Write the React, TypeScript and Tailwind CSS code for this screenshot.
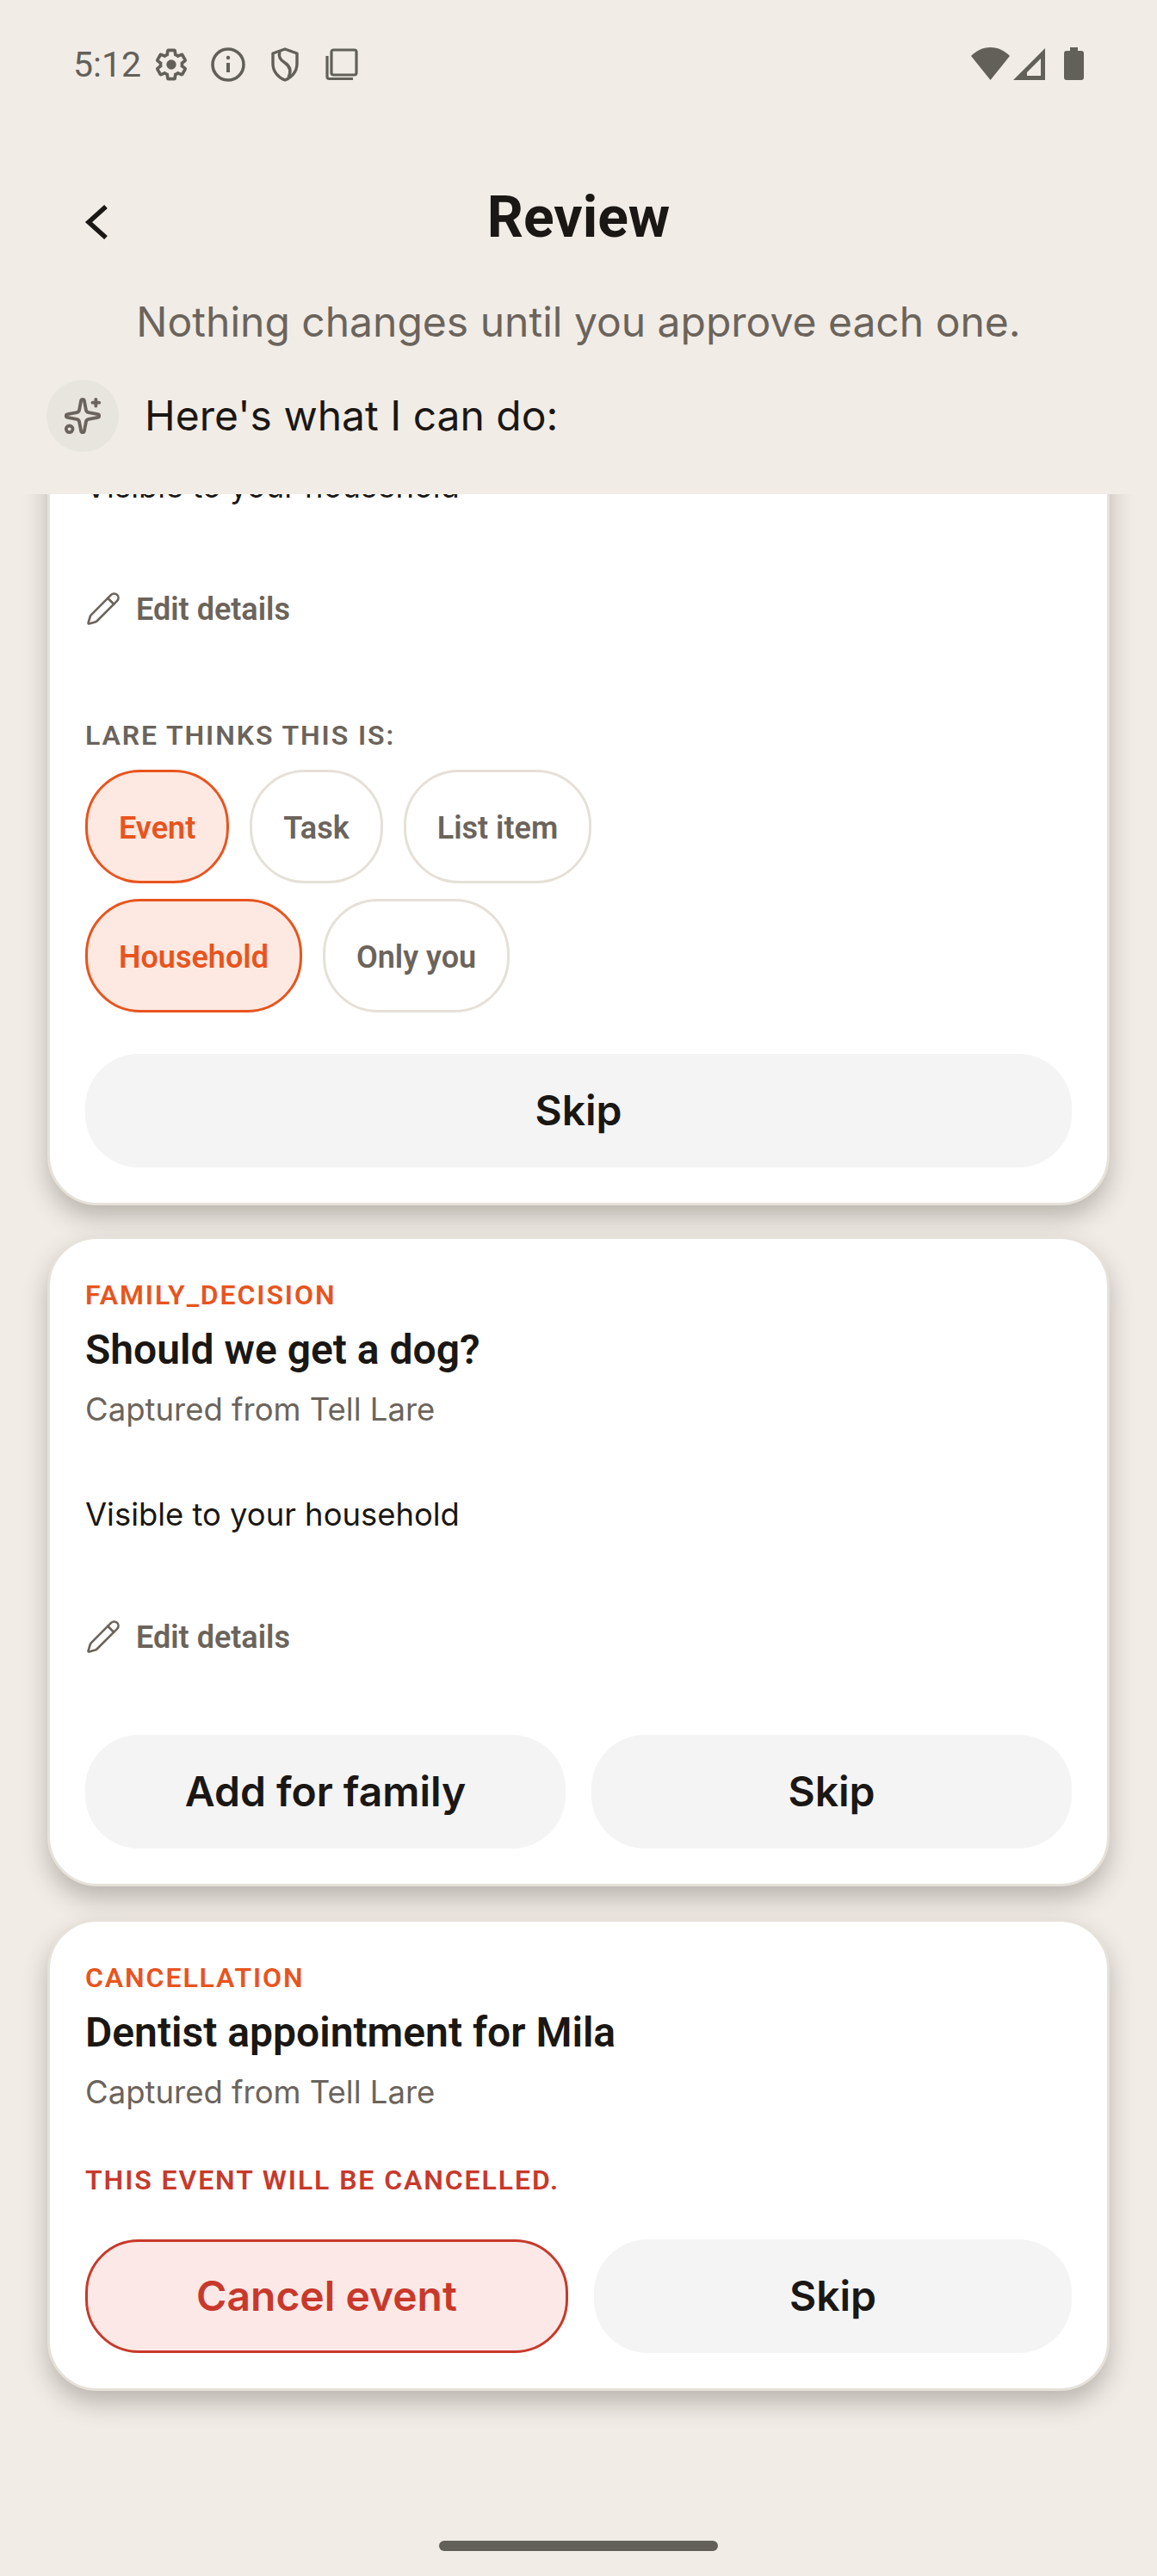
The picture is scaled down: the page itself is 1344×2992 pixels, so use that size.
import { Pencil, Sparkles } from 'lucide-react';

const GEAR =
  'M19.43 12.98c.04-.32.07-.64.07-.98 0-.34-.03-.66-.07-.98l2.11-1.65c.19-.15.24-.42.12-.64l-2-3.46c-.12-.22-.39-.3-.61-.22l-2.49 1c-.52-.4-1.08-.73-1.69-.98l-.38-2.65C14.46 2.18 14.25 2 14 2h-4c-.25 0-.46.18-.49.42l-.38 2.65c-.61.25-1.17.59-1.69.98l-2.49-1c-.23-.09-.49 0-.61.22l-2 3.46c-.13.22-.07.49.12.64l2.11 1.65c-.04.32-.07.65-.07.98 0 .33.03.66.07.98l-2.11 1.65c-.19.15-.24.42-.12.64l2 3.46c.12.22.39.3.61.22l2.49-1c.52.4 1.08.73 1.69.98l.38 2.65c.03.24.24.42.49.42h4c.25 0 .46-.18.49-.42l.38-2.65c.61-.25 1.17-.59 1.69-.98l2.49 1c.23.09.49 0 .61-.22l2-3.46c.12-.22.07-.49-.12-.64l-2.11-1.65z';

function StatusBar() {
  return (
    <div className="h-[200px] shrink-0 flex items-start justify-between pl-[85px] pr-[85px] pt-[55px] text-[#63605a]">
      <div className="flex items-center h-[40px]">
        <span className="font-['Roboto',sans-serif] text-[41px] leading-[40px] w-[94px]">5:12</span>
        <svg width="40" height="40" viewBox="0 0 24 24" fill="none" stroke="currentColor" strokeWidth="2.2">
          <path d={GEAR} />
          <circle cx="12" cy="12" r="3.4" fill="currentColor" stroke="none" />
        </svg>
        <svg className="ml-[26px]" width="40" height="40" viewBox="0 0 40 40" fill="none" stroke="currentColor" strokeWidth="3.6">
          <circle cx="20" cy="20" r="18" />
          <path d="M20 18v11" strokeWidth="4" />
          <circle cx="20" cy="12" r="2.2" fill="currentColor" stroke="none" />
        </svg>
        <svg className="ml-[30px]" width="32" height="40" viewBox="0 0 32 40" fill="none" stroke="currentColor" strokeWidth="3.4">
          <path d="M16 2 30 7v12c0 9-6 16-14 19C8 35 2 28 2 19V7z" strokeLinejoin="round" />
          <path d="M10 5c-2 6 1 10 6 13 6 4 8 9 4 17" />
        </svg>
        <svg className="ml-[31px]" width="38" height="38" viewBox="0 0 38 38" fill="none" stroke="currentColor" strokeWidth="3.2">
          <rect x="7" y="2" width="29" height="29" rx="2.5" />
          <path d="M2 9v24a2.5 2.5 0 0 0 2.5 2.5H32" />
        </svg>
      </div>
      <div className="flex items-center h-[38px]">
        <svg width="45" height="38" viewBox="0 0 45 38" fill="currentColor">
          <path d="M22.5 38 0 10C6 4 13.500 0 22.500 0S39 4 45 10z" />
        </svg>
        <svg className="ml-[4px]" width="37" height="37" viewBox="0 0 37 37" fill="currentColor">
          <path fillRule="evenodd" d="M37 0v37H0zM32 12 16 28v4h16z" />
        </svg>
        <svg className="ml-[22px]" width="23" height="38" viewBox="0 0 23 38" fill="currentColor">
          <path d="M7 0h9v4h4a3 3 0 0 1 3 3v28a3 3 0 0 1-3 3H3a3 3 0 0 1-3-3V7a3 3 0 0 1 3-3h4z" />
        </svg>
      </div>
    </div>
  );
}

function Label({ children, color }: { children: React.ReactNode; color: string }) {
  return <div className={`font-['Roboto',sans-serif] text-[32px] leading-[36px] font-semibold tracking-[1.9px] ${color}`}>{children}</div>;
}

function CardHead({ label, title }: { label: string; title: string }) {
  return (
    <>
      <Label color="text-[#e8541e]">{label}</Label>
      <div className="mt-[19px] font-['Roboto',sans-serif] text-[48px] leading-[54px] font-semibold text-[#1a1714]">{title}</div>
      <div className="mt-[20px] text-[36.5px] leading-[44px] text-[#6b645c]">Captured from Tell Lare</div>
    </>
  );
}

function EditDetails() {
  return (
    <div className="flex items-center h-[44px] text-[#6b645c]">
      <Pencil className="-mt-[2px]" size={42} strokeWidth={1.5} />
      <span className="ml-[17px] font-['Roboto',sans-serif] text-[36px] leading-[44px] font-semibold">Edit details</span>
    </div>
  );
}

function Visible() {
  return <div className="text-[36.4px] leading-[44px] text-[#1a1714]">Visible to your household</div>;
}

function Chip({ text, on }: { text: string; on?: boolean }) {
  return (
    <div
      className={`h-[132px] px-[36px] pt-[3px] flex items-center rounded-[64px] border-[3px] font-['Roboto',sans-serif] text-[36px] font-semibold ${
        on ? 'bg-[#fde9e1] border-[#e8541e] text-[#e8541e]' : 'bg-white border-[#e5e0d8] text-[#6b645c]'
      }`}
    >
      {text}
    </div>
  );
}

function Btn({ text, danger }: { text: string; danger?: boolean }) {
  return (
    <div
      className={`flex-1 h-[132px] rounded-[62px] flex items-center justify-center text-[48px] font-semibold ${
        danger ? 'bg-[#fce9e7] border-[3px] border-[#c8392b] text-[#c8392b]' : 'bg-[#f4f4f4] text-[#1a1714]'
      }`}
    >
      {text}
    </div>
  );
}

function Card({ children }: { children: React.ReactNode }) {
  return (
    <div className="rounded-[58px] bg-white border-[3px] border-[#e6e1d9] shadow-[0_14px_28px_rgba(60,55,45,0.3)] px-[41px] pt-[47px] pb-[41px]">
      {children}
    </div>
  );
}

export default function App() {
  return (
    <div className="relative w-[1344px] h-[2992px] overflow-hidden bg-[#f1ece6] font-['Inter',sans-serif] flex flex-col">
      <StatusBar />

      {/* Top bar */}
      <div className="relative h-[104px] shrink-0 flex items-center justify-center">
        <svg className="absolute left-[98px] top-[38px]" width="28" height="40" viewBox="0 0 28 40" fill="none" stroke="#1a1714" strokeWidth="5.5">
          <path d="M25 2 5 20l20 18" />
        </svg>
        <span className="pt-[2px] font-['Roboto',sans-serif] text-[66px] leading-[72px] font-bold text-[#1a1714]">Review</span>
      </div>

      <div className="mt-[42px] text-center text-[48px] leading-[56px] text-[#6b645c]">
        Nothing changes until you approve each one.
      </div>

      <div className="mt-[39px] ml-[54px] flex items-center h-[84px]">
        <div className="w-[84px] h-[84px] rounded-full bg-[#e8e5df] flex items-center justify-center text-[#6b645c]">
          <Sparkles size={46} strokeWidth={2} />
        </div>
        <span className="ml-[30px] text-[48px] leading-[60px] text-[#1a1714]">Here's what I can do:</span>
      </div>

      {/* Scrolled list, first card is cut off at the top */}
      <div className="mt-[49px] flex-1 overflow-hidden">
        <div className="px-[55px] -mt-[92px] flex flex-col">
          <Card>
            <div className="pt-[11px]">
              <Visible />
            </div>
            <div className="mt-[99px]">
              <EditDetails />
            </div>
            <div className="mt-[106px]">
              <Label color="text-[#6b645c]">LARE THINKS THIS IS:</Label>
            </div>
            <div className="mt-[22px] flex gap-[24px]">
              <Chip text="Event" on />
              <Chip text="Task" />
              <Chip text="List item" />
            </div>
            <div className="mt-[18px] flex gap-[24px]">
              <Chip text="Household" on />
              <Chip text="Only you" />
            </div>
            <div className="mt-[48px] flex">
              <Btn text="Skip" />
            </div>
          </Card>

          <div className="mt-[36px]">
            <Card>
              <CardHead label="FAMILY_DECISION" title="Should we get a dog?" />
              <div className="mt-[78px]">
                <Visible />
              </div>
              <div className="mt-[99px]">
                <EditDetails />
              </div>
              <div className="mt-[91px] flex gap-[30px]">
                <Btn text="Add for family" />
                <Btn text="Skip" />
              </div>
            </Card>
          </div>

          <div className="mt-[38px]">
            <Card>
              <CardHead label="CANCELLATION" title="Dentist appointment for Mila" />
              <div className="mt-[62px]">
                <Label color="text-[#c8392b]">THIS EVENT WILL BE CANCELLED.</Label>
              </div>
              <div className="mt-[51px] flex gap-[30px]">
                <Btn text="Cancel event" danger />
                <Btn text="Skip" />
              </div>
            </Card>
          </div>
        </div>
      </div>

      {/* Gesture bar */}
      <div className="absolute left-[510px] top-[2951px] w-[324px] h-[12px] rounded-full bg-[#63605a]" />
    </div>
  );
}
